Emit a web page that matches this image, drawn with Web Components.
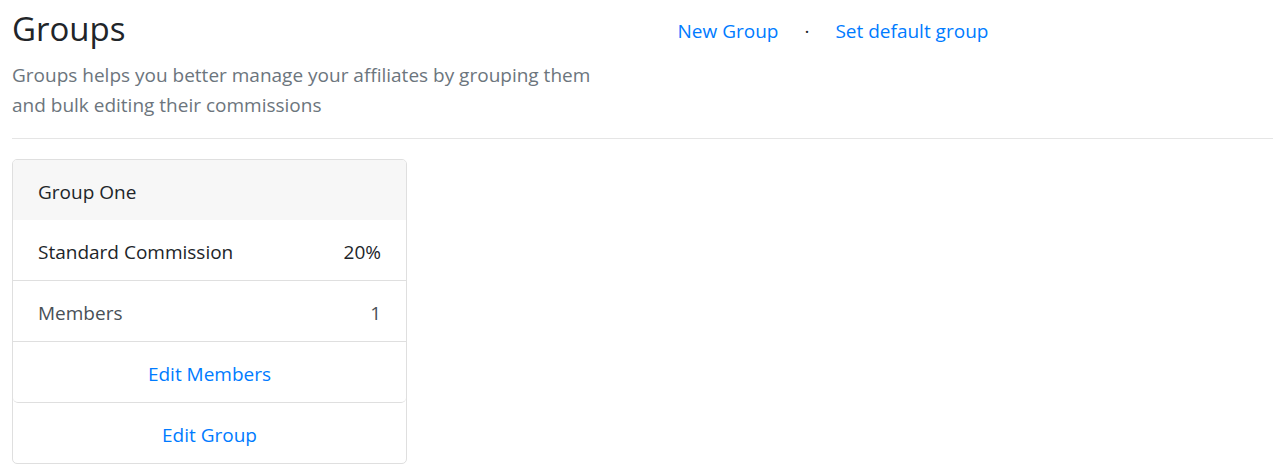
<!DOCTYPE html>
<html lang="en">
<head>
<meta charset="utf-8">
<meta name="viewport" content="width=device-width, initial-scale=1">
<title>Groups</title>
<style>
  body {
    margin: 0;
    background: #fff;
    color: #212529;
    font: 19px/30px "Open Sans", "Noto Sans", sans-serif;
  }
</style>
</head>
<body>
<groups-page>
  <page-header slot="header">
    <span slot="title">Groups</span>
    <span slot="lead">Groups helps you better manage your affiliates by grouping them and bulk editing their commissions</span>
    <action-link slot="actions" href="#new">New Group</action-link>
    <span slot="actions">·</span>
    <action-link slot="actions" href="#default">Set default group</action-link>
  </page-header>
  <group-card>
    <span slot="name">Group One</span>
    <group-row><span>Standard Commission</span><span slot="value">20%</span></group-row>
    <group-row muted><span>Members</span><span slot="value">1</span></group-row>
    <group-row center last><action-link href="#members">Edit Members</action-link></group-row>
    <action-link slot="footer" href="#edit">Edit Group</action-link>
  </group-card>
</groups-page>
<script>
  function define(name, html) {
    const template = document.createElement('template');
    template.innerHTML = html;
    customElements.define(name, class extends HTMLElement {
      constructor() {
        super();
        this.attachShadow({ mode: 'open' }).append(template.content.cloneNode(true));
      }
    });
  }

  define('groups-page', `
    <style>
      :host { display: block; padding: 8px 9px 11px 12px; }
      hr { margin: 18px 0 20px; border: 0; border-top: 1px solid #e5e5e5; }
      .cards { display: grid; grid-template-columns: repeat(3, 1fr); gap: 38px; }
    </style>
    <slot name="header"></slot>
    <hr>
    <main class="cards"><slot></slot></main>`);

  define('page-header', `
    <style>
      :host { display: block; }
      header { display: grid; grid-template-columns: 1fr 1fr; column-gap: 38px; }
      h1 { margin: 0 0 10px; font-size: 33px; font-weight: 400; line-height: 42px; }
      p { margin: 0; color: #6c757d; }
      nav { display: flex; align-self: start; gap: 26px; padding: 8px 16px; }
    </style>
    <header>
      <div>
        <h1><slot name="title"></slot></h1>
        <p><slot name="lead"></slot></p>
      </div>
      <nav><slot name="actions"></slot></nav>
    </header>`);

  define('group-card', `
    <style>
      :host { display: block; border: 1px solid #dfdfdf; border-radius: 5px; overflow: hidden; }
      h2 { margin: 0; padding: 17px 25px 13px; background: #f7f7f7; font-size: inherit; font-weight: 400; }
      footer { padding: 17px 25px 13px; text-align: center; }
    </style>
    <h2><slot name="name"></slot></h2>
    <slot></slot>
    <footer><slot name="footer"></slot></footer>`);

  define('group-row', `
    <style>
      :host { display: flex; justify-content: space-between; padding: 17px 25px 13px; border-bottom: 1px solid #dfdfdf; }
      :host([muted]) { color: #495057; }
      :host([center]) { justify-content: center; }
      :host([last]) { border-radius: 0 0 5px 5px; }
    </style>
    <slot></slot>
    <slot name="value"></slot>`);

  customElements.define('action-link', class extends HTMLElement {
    constructor() {
      super();
      this.attachShadow({ mode: 'open' }).innerHTML = `
        <style>
          :host { display: inline-block; }
          a { color: #007bff; text-decoration: none; }
          a:hover { text-decoration: underline; }
        </style>
        <a><slot></slot></a>`;
    }
    connectedCallback() {
      this.shadowRoot.querySelector('a').href = this.getAttribute('href');
    }
  });
</script>
</body>
</html>
